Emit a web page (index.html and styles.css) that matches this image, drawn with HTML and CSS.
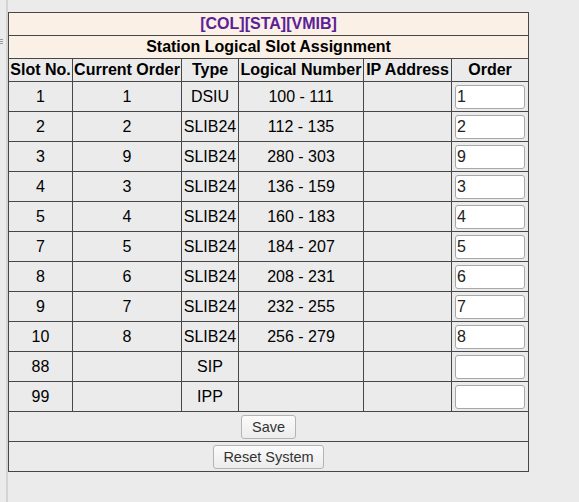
FILE: index.html
```html
<!DOCTYPE html>
<html>
<head>
<meta charset="utf-8">
<link rel="stylesheet" href="styles.css">
</head>
<body>
<div class="frame">
  <div class="splitter"><div class="grip"><span></span><span></span><span></span></div></div>
  <div class="main">
    <table class="grid">
      <colgroup>
        <col class="c1"><col class="c2"><col class="c3"><col class="c4"><col class="c5"><col class="c6">
      </colgroup>
      <tr class="hrow title"><td colspan="6">[COL][STA][VMIB]</td></tr>
      <tr class="hrow sub"><td colspan="6">Station Logical Slot Assignment</td></tr>
      <tr class="hrow head"><th>Slot No.</th><th>Current Order</th><th>Type</th><th>Logical Number</th><th>IP Address</th><th>Order</th></tr>
      <tr class="drow"><td>1</td><td>1</td><td>DSIU</td><td>100 - 111</td><td></td><td class="oc"><input class="ord" type="text" value="1"></td></tr>
      <tr class="drow"><td>2</td><td>2</td><td>SLIB24</td><td>112 - 135</td><td></td><td class="oc"><input class="ord" type="text" value="2"></td></tr>
      <tr class="drow"><td>3</td><td>9</td><td>SLIB24</td><td>280 - 303</td><td></td><td class="oc"><input class="ord" type="text" value="9"></td></tr>
      <tr class="drow"><td>4</td><td>3</td><td>SLIB24</td><td>136 - 159</td><td></td><td class="oc"><input class="ord" type="text" value="3"></td></tr>
      <tr class="drow"><td>5</td><td>4</td><td>SLIB24</td><td>160 - 183</td><td></td><td class="oc"><input class="ord" type="text" value="4"></td></tr>
      <tr class="drow"><td>7</td><td>5</td><td>SLIB24</td><td>184 - 207</td><td></td><td class="oc"><input class="ord" type="text" value="5"></td></tr>
      <tr class="drow"><td>8</td><td>6</td><td>SLIB24</td><td>208 - 231</td><td></td><td class="oc"><input class="ord" type="text" value="6"></td></tr>
      <tr class="drow"><td>9</td><td>7</td><td>SLIB24</td><td>232 - 255</td><td></td><td class="oc"><input class="ord" type="text" value="7"></td></tr>
      <tr class="drow"><td>10</td><td>8</td><td>SLIB24</td><td>256 - 279</td><td></td><td class="oc"><input class="ord" type="text" value="8"></td></tr>
      <tr class="drow"><td>88</td><td></td><td>SIP</td><td></td><td></td><td class="oc"><input class="ord" type="text" value=""></td></tr>
      <tr class="drow"><td>99</td><td></td><td>IPP</td><td></td><td></td><td class="oc"><input class="ord" type="text" value=""></td></tr>
      <tr class="drow"><td colspan="6"><button class="btn btn-save">Save</button></td></tr>
      <tr class="drow"><td colspan="6"><button class="btn btn-reset">Reset System</button></td></tr>
    </table>
  </div>
</div>
</body>
</html>
```

FILE: styles.css
```css
html, body {
  margin: 0;
  padding: 0;
  background: #ebebeb;
  height: 100%;
}
.frame {
  display: flex;
  min-height: 502px;
  font-family: "Liberation Sans", Arial, sans-serif;
}
.splitter {
  width: 6px;
  border-right: 2px solid #d4d4d4;
  flex: none;
  padding-top: 39px;
}
.grip {
  display: flex;
  flex-direction: column;
  gap: 1px;
  width: 3px;
}
.grip span {
  display: block;
  height: 1px;
  background: #9a9a9a;
}
.main {
  padding-top: 12px;
}
.grid {
  border-collapse: collapse;
  table-layout: fixed;
  width: 520px;
  font-size: 16px;
  color: #000;
}
.c1 { width: 64px; }
.c2 { width: 109px; }
.c3 { width: 57px; }
.c4 { width: 125px; }
.c5 { width: 88px; }
.c6 { width: 77px; }
.grid td, .grid th {
  border: 1px solid #474747;
  padding: 0;
  text-align: center;
  vertical-align: middle;
  white-space: nowrap;
  overflow: hidden;
}
.hrow { height: 23px; }
.title td, .sub td {
  background: #faf0e6;
  font-weight: bold;
}
.title td { color: #5c2196; }
.head th { font-weight: bold; }
.drow { height: 30px; }
.oc { padding: 0; }
.ord {
  box-sizing: border-box;
  width: 70px;
  height: 24px;
  margin: 0;
  display: block;
  margin-left: 3px;
  border: 1px solid #a8a8a8;
  border-radius: 3px;
  background: #fff;
  padding: 0 1px;
  font-family: "Liberation Sans", Arial, sans-serif;
  font-size: 16px;
  color: #222;
  outline: none;
}
.btn {
  box-sizing: border-box;
  height: 24px;
  border: 1px solid #b4b4b4;
  border-radius: 3px;
  background: linear-gradient(#fbfbfb, #ececec);
  font-family: "Liberation Sans", Arial, sans-serif;
  font-size: 14.5px;
  color: #333;
  padding: 0;
  vertical-align: middle;
}
.btn-save { width: 55px; }
.btn-reset { width: 111px; }
```
